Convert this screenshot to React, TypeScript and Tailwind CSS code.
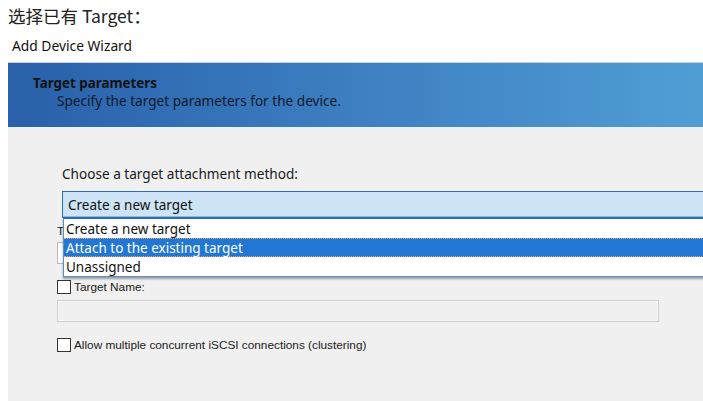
import React from "react"

const ui = { fontFamily: '"Noto Sans", "Open Sans", sans-serif' }
const tahoma = { fontFamily: '"Liberation Sans", Arial, sans-serif' }

const options = ["Create a new target", "Attach to the existing target", "Unassigned"]

function Checkbox({ label }: { label: string }) {
  return (
    <label className="flex items-center gap-[3px] text-[11.8px] leading-[14px] text-[#1a1a1a]" style={tahoma}>
      <span className="block w-[14px] h-[14px] border border-[#333] bg-white" />
      <span>{label}</span>
    </label>
  )
}

export default function App() {
  return (
    <div className="w-[703px] h-[401px] overflow-hidden bg-white flex flex-col">
      <h1
        className="pl-[8px] pt-[4px] text-[17.5px] leading-[24px] text-[#222]"
        style={{ fontFamily: '"Noto Sans CJK SC", "Noto Sans", sans-serif' }}
      >
        选择已有 Target：
      </h1>
      <div className="pl-[12px] pt-[9px] text-[13.8px] leading-[18px] text-[#111]" style={ui}>
        Add Device Wizard
      </div>

      <div className="ml-[8px] mt-[7px] w-[720px] flex-1 flex flex-col">
        <div className="h-[1px] bg-[#c9d3de]" />
        <div
          className="h-[64px] pl-[25px] pt-[12px] bg-gradient-to-r from-[#2860aa] via-[#3e80c2] to-[#52a0d6]"
          style={ui}
        >
          <div className="text-[13.4px] leading-[17px] font-bold text-[#111]">Target parameters</div>
          <div className="pl-[24px] text-[13.6px] leading-[18px] text-[#0f1a2a]">
            Specify the target parameters for the device.
          </div>
        </div>

        <div className="flex-1 bg-[#f0f0f0] pl-[49px]">
          <div className="pl-[5px] pt-[37px] text-[13.6px] leading-[20px] text-[#1a1a1a]" style={ui}>
            Choose a target attachment method:
          </div>

          <div className="relative ml-[5px] mt-[7px]" style={ui}>
            <div className="h-[27px] border border-[#2b6db6] bg-[#cde4f7] pl-[5px] pt-[1px] flex items-center text-[13.5px] text-[#111] shadow-[inset_0_-1px_0_#8db7e0]">
              Create a new target
            </div>
            <div className="absolute left-[1px] top-full w-[700px] z-10 bg-white border border-[#5b8fc8] border-t-[#2b6db6] shadow-[0_2px_2px_rgba(0,0,0,0.35)]">
              {options.map((o, i) => (
                <div
                  key={o}
                  className={
                    i === 1
                      ? "h-[19px] pl-[2px] pt-[2px] flex items-center text-[13.5px] bg-[#2377d4] text-white border-y border-dotted border-[#e7a46a]"
                      : "h-[19px] pl-[2px] pt-[2px] flex items-center text-[13.5px] text-[#111]"
                  }
                >
                  {o}
                </div>
              ))}
            </div>
          </div>

          <div className="pt-[5px] text-[11.8px] leading-[16px] text-[#1a1a1a]" style={tahoma}>
            T
          </div>
          <div className="mt-[3px] w-[601px] h-[22px] border border-[#b9b9b9] bg-white" />

          <div className="mt-[16px]">
            <Checkbox label="Target Name:" />
          </div>
          <div className="mt-[6px] w-[602px] h-[22px] border border-[#cfcfcf] bg-[#f0f0f0] shadow-[inset_0_0_0_1px_#f7f7f7]" />

          <div className="mt-[16px]">
            <Checkbox label="Allow multiple concurrent iSCSI connections (clustering)" />
          </div>
        </div>
      </div>
    </div>
  )
}
